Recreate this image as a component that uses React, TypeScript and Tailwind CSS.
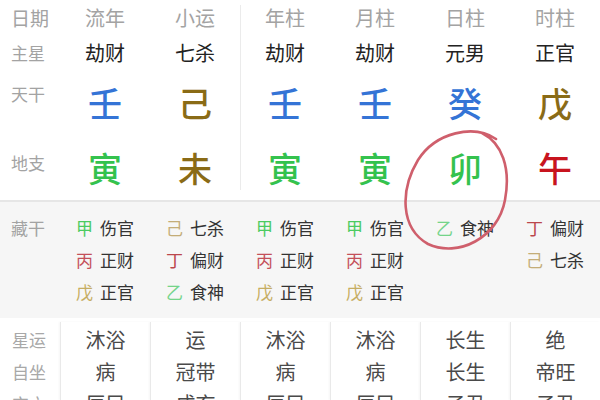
import React from 'react';

type Hidden = { gan: string; color: string; god: string };

interface Pillar {
  title: string;
  star: string;
  gan: string;
  ganColor: string;
  zhi: string;
  zhiColor: string;
  hidden: Hidden[];
  xingyun: string;
  zizuo: string;
  kongwang: string;
}

// hidden stem colours are a touch lighter than the main stems
const H = {
  jia: 'text-[#4ccb5f]',
  bing: 'text-[#c4505a]',
  wu: 'text-[#c6ad62]',
  ji: 'text-[#c4ad78]',
  ding: 'text-[#bb474c]',
  yi: 'text-[#74d48a]',
};

const BLUE = 'text-[#3474d6]';
const OLIVE = 'text-[#8a6b16]';
const GREEN = 'text-[#34c24e]';
const RED = 'text-[#c8141e]';

const pillars: Pillar[] = [
  {
    title: '流年', star: '劫财', gan: '壬', ganColor: BLUE, zhi: '寅', zhiColor: GREEN,
    hidden: [
      { gan: '甲', color: H.jia, god: '伤官' },
      { gan: '丙', color: H.bing, god: '正财' },
      { gan: '戊', color: H.wu, god: '正官' },
    ],
    xingyun: '沐浴', zizuo: '病', kongwang: '辰巳',
  },
  {
    title: '小运', star: '七杀', gan: '己', ganColor: OLIVE, zhi: '未', zhiColor: OLIVE,
    hidden: [
      { gan: '己', color: H.ji, god: '七杀' },
      { gan: '丁', color: H.ding, god: '偏财' },
      { gan: '乙', color: H.yi, god: '食神' },
    ],
    xingyun: '运', zizuo: '冠带', kongwang: '戌亥',
  },
  {
    title: '年柱', star: '劫财', gan: '壬', ganColor: BLUE, zhi: '寅', zhiColor: GREEN,
    hidden: [
      { gan: '甲', color: H.jia, god: '伤官' },
      { gan: '丙', color: H.bing, god: '正财' },
      { gan: '戊', color: H.wu, god: '正官' },
    ],
    xingyun: '沐浴', zizuo: '病', kongwang: '辰巳',
  },
  {
    title: '月柱', star: '劫财', gan: '壬', ganColor: BLUE, zhi: '寅', zhiColor: GREEN,
    hidden: [
      { gan: '甲', color: H.jia, god: '伤官' },
      { gan: '丙', color: H.bing, god: '正财' },
      { gan: '戊', color: H.wu, god: '正官' },
    ],
    xingyun: '沐浴', zizuo: '病', kongwang: '辰巳',
  },
  {
    title: '日柱', star: '元男', gan: '癸', ganColor: BLUE, zhi: '卯', zhiColor: GREEN,
    hidden: [{ gan: '乙', color: H.yi, god: '食神' }],
    xingyun: '长生', zizuo: '长生', kongwang: '子丑',
  },
  {
    title: '时柱', star: '正官', gan: '戊', ganColor: OLIVE, zhi: '午', zhiColor: RED,
    hidden: [
      { gan: '丁', color: H.ding, god: '偏财' },
      { gan: '己', color: H.ji, god: '七杀' },
    ],
    xingyun: '绝', zizuo: '帝旺', kongwang: '子丑',
  },
];

const font = "font-['Noto_Sans_CJK_SC','Noto_Sans',sans-serif]";

export default function App() {
  return (
    <div className={`relative w-[600px] h-[400px] overflow-hidden bg-white ${font}`}>
      {/* Main pillars */}
      <div className="flex h-[200px] bg-white">
        <div className="w-[60px] flex flex-col pl-[11px] text-[#a3a3a3]">
          <div className="h-[36px] flex items-center text-[19px]">日期</div>
          <div className="h-[34px] flex items-center text-[17px]">主星</div>
          <div className="h-[64px] pt-[11px] text-[17px] leading-[26px]">天干</div>
          <div className="h-[66px] pt-[16px] text-[17px] leading-[26px]">地支</div>
        </div>
        {pillars.map((p, i) => (
          <div
            key={p.title}
            className={`relative w-[90px] flex flex-col items-center ${
              i === 2
                ? "before:content-[''] before:absolute before:left-0 before:top-[5px] before:bottom-[10px] before:w-px before:bg-[#ebebeb]"
                : ''
            }`}
          >
            <div className="h-[36px] flex items-center text-[20px] text-[#a3a3a3]">{p.title}</div>
            <div className="h-[34px] flex items-center text-[20px] text-[#222]">{p.star}</div>
            <div className={`h-[64px] flex items-center text-[34px] font-medium ${p.ganColor}`}>{p.gan}</div>
            <div className={`h-[66px] flex items-center text-[34px] font-medium ${p.zhiColor}`}>{p.zhi}</div>
          </div>
        ))}
      </div>

      {/* Hidden stems */}
      <div className="flex h-[118px] border-t-[2px] border-[#e6e6e6] bg-[#f6f6f6] pt-[10px]">
        <div className="w-[60px] pl-[11px] h-[32px] flex items-center text-[17px] text-[#a3a3a3]">藏干</div>
        {pillars.map((p) => (
          <div key={p.title} className="w-[90px] flex flex-col items-center">
            {p.hidden.map((h, j) => (
              <div key={j} className="h-[32px] shrink-0 flex items-center text-[17px] text-[#333]">
                <span className={h.color}>{h.gan}</span>
                <span className="ml-[7px]">{h.god}</span>
              </div>
            ))}
          </div>
        ))}
      </div>

      {/* Star luck */}
      <div className="flex h-[82px] overflow-hidden bg-white">
        <div className="w-[60px] shrink-0 pl-[12px] pt-[6px] flex flex-col text-[17px] text-[#a8a8a8]">
          <div className="h-[32px] shrink-0 flex items-center">星运</div>
          <div className="h-[32px] shrink-0 flex items-center">自坐</div>
          <div className="h-[32px] shrink-0 flex items-center">空亡</div>
        </div>
        {pillars.map((p) => (
          <div
            key={p.title}
            className="w-[90px] shrink-0 mt-[4px] pt-[2px] flex flex-col items-center border-l border-[#e9e9e9] shadow-[-1px_0_2px_rgba(0,0,0,0.04)] text-[20px] text-[#4a4a4a]"
          >
            <div className="h-[32px] shrink-0 flex items-center">{p.xingyun}</div>
            <div className="h-[32px] shrink-0 flex items-center">{p.zizuo}</div>
            <div className="h-[32px] shrink-0 flex items-center">{p.kongwang}</div>
          </div>
        ))}
      </div>

      {/* hand-drawn red circle around 卯 */}
      <svg className="absolute left-0 top-0 pointer-events-none" width="600" height="400">
        <path
          d="M 496 139 C 474 124, 436 132, 418 160 C 400 190, 400 228, 428 244 C 458 258, 498 238, 505 200 C 511 168, 502 143, 482 133"
          fill="none"
          stroke="#cf5f6c"
          strokeWidth="2.6"
          strokeLinecap="round"
        />
      </svg>
    </div>
  );
}
